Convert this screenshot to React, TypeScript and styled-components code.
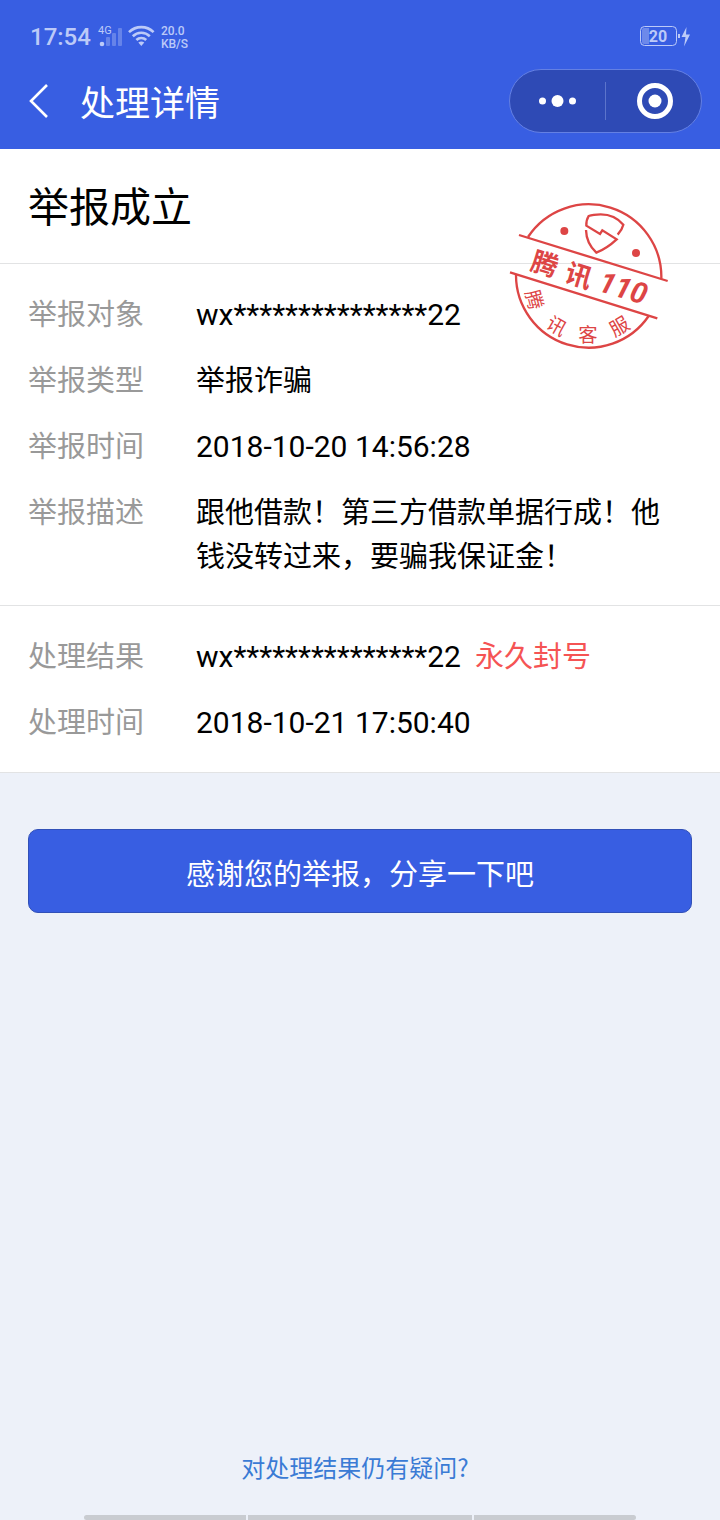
import React from 'react';
import styled, { createGlobalStyle } from 'styled-components';

const cjkStack = '"Noto Sans CJK SC", Roboto, sans-serif';

const GlobalStyle = createGlobalStyle`
  * { box-sizing: border-box; }
  body {
    margin: 0;
    background: #edf1f9;
    font-family: Roboto, "Noto Sans CJK SC", sans-serif;
    color: #000;
  }
  button { font: inherit; border: 0; padding: 0; background: none; color: inherit; cursor: pointer; }
  h1, h2, dl, dd, dt { margin: 0; font-weight: 400; }
`;

const Page = styled.div`
  display: flex;
  flex-direction: column;
  min-height: 100vh;
`;

const Header = styled.header`
  background: #385ee2;
  color: #fff;
  padding: 20px 18px 16px 28px;
`;

const StatusBar = styled.div`
  display: flex;
  align-items: center;
  height: 34px;
  margin-bottom: 15px;
  padding: 0 10px 0 2px;
  color: #bccaf8;
`;

const Clock = styled.time`
  font-size: 24px;
  line-height: 36px;
  font-weight: 500;
  margin-right: 7px;
`;

const Speed = styled.div`
  font-size: 12px;
  line-height: 13px;
  font-weight: 500;
  margin-left: 5px;
  padding-top: 2px;
  flex: 1;
`;

const NavBar = styled.div`
  display: flex;
  align-items: center;
  height: 64px;
`;

const BackButton = styled.button`
  display: flex;
  width: 52px;
  align-items: center;
`;

const NavTitle = styled.h1`
  flex: 1;
  font-family: ${cjkStack};
  font-size: 35px;
  line-height: 52px;
`;

const Capsule = styled.div`
  display: flex;
  align-items: center;
  width: 193px;
  height: 64px;
  border: 1px solid #6480e3;
  border-radius: 32px;
  background: #2e4ab5;
`;

const CapsuleButton = styled.button`
  flex: 1;
  display: flex;
  align-items: center;
  justify-content: center;
  height: 100%;
`;

const CapsuleDivider = styled.span`
  width: 1px;
  height: 38px;
  background: #5c74cb;
`;

const Report = styled.main`
  position: relative;
  background: #fff;
`;

const Verdict = styled.h2`
  padding: 29px 28px 25px;
  font-size: 41px;
  line-height: 60px;
  border-bottom: 1px solid #e2e3e4;
`;

const Details = styled.dl`
  display: flex;
  flex-direction: column;
  gap: 22px;
  padding: 29px 32px 26px 28px;
  border-bottom: 1px solid #e2e3e4;

  &:last-of-type {
    padding-bottom: 27px;
  }
`;

const Row = styled.div`
  display: flex;
  font-size: 29px;
  line-height: 44px;
`;

const Label = styled.dt`
  flex: 0 0 168px;
  color: #999;
`;

const Value = styled.dd`
  flex: 1;
`;

const Code = styled.span`
  font-size: 30px;
`;

const Penalty = styled.span`
  margin-left: 14px;
  color: #f55454;
`;

const Stamp = styled.svg`
  position: absolute;
  top: 41px;
  right: 40px;
  width: 180px;
  height: 170px;
`;

const Actions = styled.div`
  flex: 1;
  padding: 56px 28px;
`;

const ShareButton = styled.button`
  && {
    width: 100%;
    height: 84px;
    padding-top: 2px;
    border: 1px solid #3150b8;
    border-radius: 10px;
    background: #385ee2;
    color: #fff;
    font-size: 29px;
  }
`;

const Footer = styled.footer`
  display: flex;
  flex-direction: column;
  align-items: center;
`;

const DoubtLink = styled.a`
  margin: 0 10px 30px 0;
  font-family: ${cjkStack};
  font-size: 24px;
  line-height: 36px;
  color: #3a7bd5;
  text-decoration: none;
`;

const GestureBar = styled.div`
  display: grid;
  grid-template-columns: 162fr 224fr 162fr;
  gap: 2px;
  width: calc(100% - 168px);
  height: 5px;
  border-radius: 3px;
  overflow: hidden;
`;

const GestureSegment = styled.span`
  background: #c9ccd1;
`;

const SignalIcon = () => (
  <svg width="26" height="24" viewBox="0 0 26 24" fill="#bccaf8" aria-label="4G">
    <text x="0" y="9" fontSize="11" fontFamily="Roboto">4G</text>
    <circle cx="4" cy="19" r="2.3" />
    <g opacity="0.35">
      <rect x="8" y="12" width="4" height="9" rx="1" />
      <rect x="14" y="8" width="4" height="13" rx="1" />
      <rect x="20" y="3" width="4" height="18" rx="1" />
    </g>
  </svg>
);

const WifiIcon = () => (
  <svg width="32" height="24" viewBox="0 0 32 24" fill="none" stroke="#bccaf8" strokeWidth="2.6" aria-label="Wi-Fi">
    <path d="M5 7.200a17.500 17.500 0 0 1 24.600 0" />
    <path d="M8.800 11.200a12.200 12.200 0 0 1 17 0" />
    <path d="M12.400 15a7 7 0 0 1 9.800 0" />
    <path d="M14.300 17.500Q17.300 15.500 20.300 17.500L17.300 20.900z" fill="#bccaf8" stroke="none" />
  </svg>
);

const BatteryIcon = () => (
  <svg width="52" height="22" viewBox="0 0 52 22" aria-label="20%">
    <rect x="0.5" y="0.5" width="36" height="19" rx="4" fill="none" stroke="#bccaf8" />
    <path d="M4 2h5v16H4a2 2 0 0 1-2-2V4a2 2 0 0 1 2-2z" fill="#6d89ea" />
    <rect x="38" y="8" width="2" height="4" fill="#bccaf8" />
    <path d="M46.500 1L41.500 11h4L44 20.500l6-12h-4z" fill="#bccaf8" />
    <text x="18" y="16" textAnchor="middle" fontSize="16" fontWeight="700" fontFamily="Roboto" fill="#bccaf8">20</text>
  </svg>
);

const ServiceStamp = () => (
  <Stamp viewBox="0 0 540 510" fill="none" stroke="#dd4545" strokeWidth="7" role="img" aria-label="腾讯110 腾讯客服">
    <path d="M57 135L503 273M30 247L472 385" />
    <path d="M84 141A218 218 0 0 1 484 266M48 254A218 218 0 0 0 446 378" />
    <path d="M353 134Q366 120 370 104Q344 73 302 73Q279 73 266 78Q258 91 259 107L300 132L307 121L350 148Q321 175 289 188Q259 160 258 120" />
    <g fill="#dd4545" stroke="none">
      <circle cx="193" cy="123" r="12" />
      <circle cx="408" cy="189" r="12" />
      <g fontFamily='Roboto, "Noto Sans CJK SC", sans-serif' textAnchor="middle">
        <g fontSize="80" fontWeight="700">
          <text transform="translate(135 221) rotate(17)" y="30">腾</text>
          <text transform="translate(237 256) rotate(17)" y="30">讯</text>
          <text transform="translate(370 293) rotate(17)" y="31" fontSize="88" fontStyle="italic">110</text>
        </g>
        <g fontSize="58">
          <text transform="translate(103 329) rotate(75)" y="21">腾</text>
          <text transform="translate(170 408) rotate(30)" y="21">讯</text>
          <text transform="translate(264 434)" y="21">客</text>
          <text transform="translate(358 409) rotate(-30)" y="21">服</text>
        </g>
      </g>
    </g>
  </Stamp>
);

const Field = ({ label, children }: { label: string; children: React.ReactNode }) => (
  <Row>
    <Label>{label}</Label>
    <Value>{children}</Value>
  </Row>
);

export default function App() {
  return (
    <>
      <GlobalStyle />
      <Page>
        <Header>
          <StatusBar>
            <Clock>17:54</Clock>
            <SignalIcon />
            <WifiIcon />
            <Speed>20.0<br />KB/S</Speed>
            <BatteryIcon />
          </StatusBar>
          <NavBar>
            <BackButton aria-label="返回">
              <svg width="22" height="36" viewBox="0 0 22 36" fill="none" stroke="#fff" strokeWidth="2.6">
                <path d="M19 2L3 18L19 34" />
              </svg>
            </BackButton>
            <NavTitle>处理详情</NavTitle>
            <Capsule>
              <CapsuleButton aria-label="更多">
                <svg width="40" height="14" viewBox="0 0 40 14" fill="#fff">
                  <circle cx="4.500" cy="7" r="3.500" />
                  <circle cx="19.500" cy="7" r="6" />
                  <circle cx="34.500" cy="7" r="3.500" />
                </svg>
              </CapsuleButton>
              <CapsuleDivider />
              <CapsuleButton aria-label="关闭">
                <svg width="38" height="36" viewBox="0 0 38 36">
                  <circle cx="20" cy="18" r="15.500" fill="none" stroke="#fff" strokeWidth="5" />
                  <circle cx="20" cy="18" r="6.500" fill="#fff" />
                </svg>
              </CapsuleButton>
            </Capsule>
          </NavBar>
        </Header>
        <Report>
          <Verdict>举报成立</Verdict>
          <Details>
            <Field label="举报对象"><Code>wx***************22</Code></Field>
            <Field label="举报类型">举报诈骗</Field>
            <Field label="举报时间"><Code>2018-10-20 14:56:28</Code></Field>
            <Field label="举报描述">跟他借款！第三方借款单据行成！他钱没转过来，要骗我保证金！</Field>
          </Details>
          <Details>
            <Field label="处理结果">
              <Code>wx***************22</Code><Penalty>永久封号</Penalty>
            </Field>
            <Field label="处理时间"><Code>2018-10-21 17:50:40</Code></Field>
          </Details>
          <ServiceStamp />
        </Report>
        <Actions>
          <ShareButton>感谢您的举报，分享一下吧</ShareButton>
        </Actions>
        <Footer>
          <DoubtLink href="#doubt">对处理结果仍有疑问?</DoubtLink>
          <GestureBar>
            <GestureSegment />
            <GestureSegment />
            <GestureSegment />
          </GestureBar>
        </Footer>
      </Page>
    </>
  );
}
